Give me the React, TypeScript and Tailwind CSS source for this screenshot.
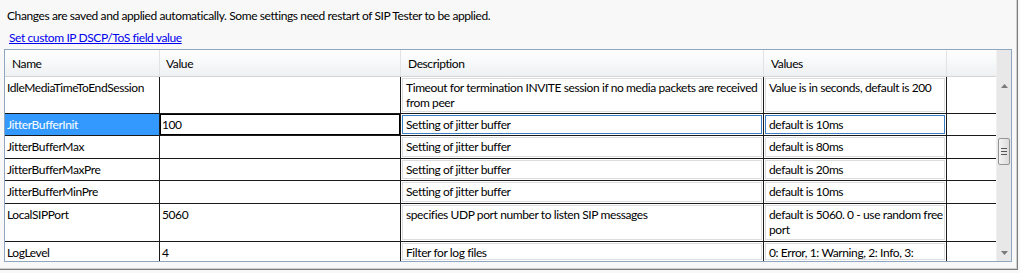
import React from 'react';

interface Row {
  name: string;
  value: string;
  desc: string;
  values: string;
  h: string;
  selected?: boolean;
}

const ROWS: Row[] = [
  {
    name: 'IdleMediaTimeToEndSession',
    value: '',
    desc: 'Timeout for termination INVITE session if no media packets are received\nfrom peer',
    values: 'Value is in seconds, default is 200',
    h: 'h-[37px]',
  },
  { name: 'JitterBufferInit', value: '100', desc: 'Setting of jitter buffer', values: 'default is 10ms', h: 'h-[22px]', selected: true },
  { name: 'JitterBufferMax', value: '', desc: 'Setting of jitter buffer', values: 'default is 80ms', h: 'h-[23px]' },
  { name: 'JitterBufferMaxPre', value: '', desc: 'Setting of jitter buffer', values: 'default is 20ms', h: 'h-[22px]' },
  { name: 'JitterBufferMinPre', value: '', desc: 'Setting of jitter buffer', values: 'default is 10ms', h: 'h-[23px]' },
  {
    name: 'LocalSIPPort',
    value: '5060',
    desc: 'specifies UDP port number to listen SIP messages',
    values: 'default is 5060. 0 - use random free\nport',
    h: 'h-[38px]',
  },
  { name: 'LogLevel', value: '4', desc: 'Filter for log files', values: '0: Error, 1: Warning, 2: Info, 3:', h: 'h-[20px]' },
];

function TextCell({ text, focused, width }: { text: string; focused?: boolean; width: string }) {
  return (
    <div className={`${width} shrink-0 border-r border-[#1a1a1a] p-[1px]`}>
      <div
        className={`h-full overflow-hidden whitespace-pre-line border bg-white pl-[3px] pt-[1px] ${
          focused ? 'border-[#3a7ec4]' : 'border-[#dcdcdc]'
        }`}
      >
        {text}
      </div>
    </div>
  );
}

function ScrollArrow({ down }: { down?: boolean }) {
  return (
    <svg width="7" height="4" viewBox="0 0 7 4" className="mx-auto">
      <path d={down ? 'M0 0 L7 0 L3.5 4 Z' : 'M0 4 L7 4 L3.5 0 Z'} fill="#7a7a7a" />
    </svg>
  );
}

export default function App() {
  return (
    <div
      className="h-[273px] w-[1020px] overflow-hidden bg-[#f8f8f8] text-[12px] leading-[15px] tracking-[-0.4px] text-black"
      style={{ fontFamily: 'Lato, "Open Sans", sans-serif' }}
    >
      <div className="h-[270px] w-[1018px] border-b border-r border-[#7d7d7d]">
        <div className="h-[269px] w-[1017px] border-b border-r border-[#d0d0d0]">
          <p className="pl-[7px] pt-[8px]">
            Changes are saved and applied automatically. Some settings need restart of SIP Tester to be applied.
          </p>
          <a href="#" className="ml-[9px] mt-[7px] inline-block text-[#0000ee] underline">
            Set custom IP DSCP/ToS field value
          </a>

          <div className="ml-[4px] mt-[4px] flex h-[213px] w-[1008px] border border-[#8ea6bf]">
            <div className="flex flex-1 flex-col overflow-hidden bg-white">
              {/* Header */}
              <div className="flex h-[27px] shrink-0 border-b border-[#d5d5d5] bg-gradient-to-b from-white via-[#f7f8f9] to-[#eef0f2]">
                <div className="flex w-[155px] items-center border-r border-[#e3e3e3] pl-[7px]">Name</div>
                <div className="flex w-[241px] items-center border-r border-[#e3e3e3] pl-[6px]">Value</div>
                <div className="flex w-[363px] items-center border-r border-[#e3e3e3] pl-[7px]">Description</div>
                <div className="flex w-[183px] items-center border-r border-[#e3e3e3] pl-[7px]">Values</div>
                <div className="flex-1" />
              </div>

              {ROWS.map((r) => (
                <div key={r.name} className={`flex ${r.h} shrink-0 border-b border-[#1a1a1a]`}>
                  <div
                    className={`w-[155px] shrink-0 border-r border-[#1a1a1a] pl-[2px] pt-[3px] ${
                      r.selected ? 'bg-[#3399ff] text-white' : ''
                    }`}
                  >
                    {r.name}
                  </div>
                  <div
                    className={`w-[241px] shrink-0 border-r border-[#1a1a1a] pl-[2px] pt-[3px] ${
                      r.selected ? 'shadow-[inset_0_0_0_1px_#000]' : ''
                    }`}
                  >
                    {r.value}
                  </div>
                  <TextCell text={r.desc} focused={r.selected} width="w-[363px]" />
                  <TextCell text={r.values} focused={r.selected} width="w-[183px]" />
                  <div className="flex-1" />
                </div>
              ))}
            </div>

            {/* Vertical scrollbar */}
            <div className="flex w-[15px] shrink-0 flex-col border-l border-[#f0f0f0] bg-[#e8e8e8]">
              <div className="h-[27px]" />
              <div className="flex h-[18px] items-center">
                <ScrollArrow />
              </div>
              <div className="mx-[1px] mt-[43px] flex h-[27px] flex-col items-center justify-center gap-[2px] rounded-[2px] border border-[#959595] bg-gradient-to-r from-[#f3f3f3] to-[#dcdcdc]">
                <div className="h-px w-[6px] bg-[#555]" />
                <div className="h-px w-[6px] bg-[#555]" />
                <div className="h-px w-[6px] bg-[#555]" />
              </div>
              <div className="flex-1" />
              <div className="flex h-[17px] items-center">
                <ScrollArrow down />
              </div>
            </div>
          </div>
        </div>
      </div>
    </div>
  );
}
